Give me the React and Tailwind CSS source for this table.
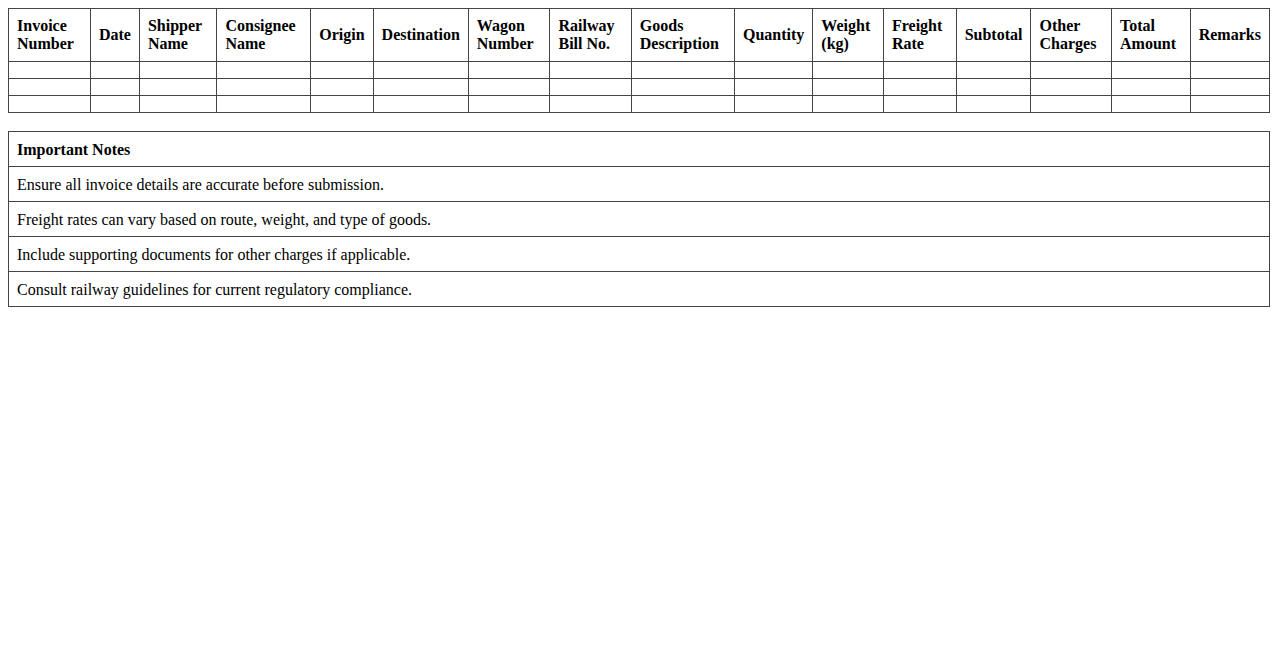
import React from "react";

const headers = [
  "Invoice Number",
  "Date",
  "Shipper Name",
  "Consignee Name",
  "Origin",
  "Destination",
  "Wagon Number",
  "Railway Bill No.",
  "Goods Description",
  "Quantity",
  "Weight (kg)",
  "Freight Rate",
  "Subtotal",
  "Other Charges",
  "Total Amount",
  "Remarks",
];

const notes = [
  "Ensure all invoice details are accurate before submission.",
  "Freight rates can vary based on route, weight, and type of goods.",
  "Include supporting documents for other charges if applicable.",
  "Consult railway guidelines for current regulatory compliance.",
];

export default function App() {
  return (
    <div className="min-h-[650px] bg-white p-2 text-black text-[16px] leading-[18px] font-['Liberation_Serif','Times_New_Roman',serif]">
      <table className="w-full border-collapse border border-[#444]">
        <thead>
          <tr>
            {headers.map((h) => (
              <th key={h} className="border border-[#444] p-2 text-left font-bold align-middle">
                {h}
              </th>
            ))}
          </tr>
        </thead>
        <tbody>
          {[0, 1, 2].map((r) => (
            <tr key={r}>
              {headers.map((h) => (
                <td key={h} className="border border-[#444] p-2 h-[17px]"></td>
              ))}
            </tr>
          ))}
        </tbody>
      </table>
      <table className="w-full border-collapse border border-[#444] mt-[18px]">
        <thead>
          <tr>
            <th className="border border-[#444] px-2 pt-[9px] pb-[7px] text-left font-bold">Important Notes</th>
          </tr>
        </thead>
        <tbody>
          {notes.map((n) => (
            <tr key={n}>
              <td className="border border-[#444] px-2 pt-[9px] pb-[7px]">{n}</td>
            </tr>
          ))}
        </tbody>
      </table>
    </div>
  );
}
